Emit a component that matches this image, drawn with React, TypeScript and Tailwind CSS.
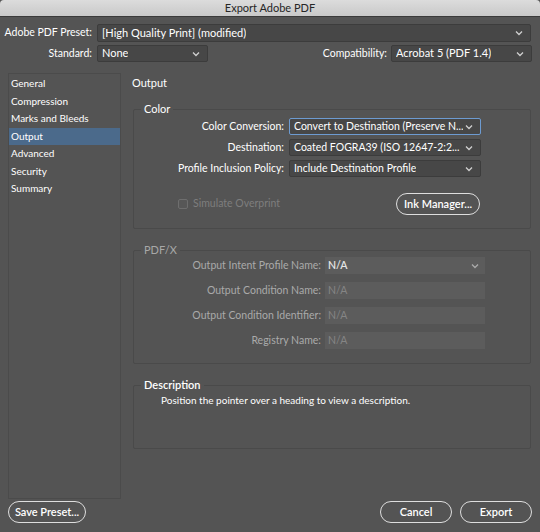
import React from "react";

const Chevron = ({ color = "#d0d0d0" }: { color?: string }) => (
  <svg width="8" height="6" viewBox="0 0 8 6" className="shrink-0">
    <polyline points="1,1.5 4,4.5 7,1.5" fill="none" stroke={color} strokeWidth="1.3" />
  </svg>
);

const Select = ({
  text,
  className = "",
  focus = false,
}: {
  text: string;
  className?: string;
  focus?: boolean;
}) => (
  <div
    className={
      "flex items-center justify-between px-[4px] bg-[#474747] text-white rounded-[2px] " +
      (focus ? "border-[1.5px] border-[#6d9bd1]" : "border border-[#3c3c3c]") +
      " " +
      className
    }
  >
    <span className="whitespace-nowrap overflow-hidden">{text}</span>
    <span className="pl-[2px] pr-[3px]">
      <Chevron />
    </span>
  </div>
);

const PillButton = ({ text, className = "" }: { text: string; className?: string }) => (
  <div
    className={
      "flex items-center justify-center h-[22px] rounded-full border-[1.5px] border-[#dedede] text-white text-[11px] font-semibold " +
      className
    }
  >
    {text}
  </div>
);

export default function App() {
  const sidebar = ["General", "Compression", "Marks and Bleeds", "Output", "Advanced", "Security", "Summary"];
  return (
    <div
      className="w-[540px] h-[532px] bg-[#545454] flex flex-col overflow-hidden text-[10.5px] text-[#e8e8e8]"
      style={{ fontFamily: "Lato, 'Liberation Sans', sans-serif" }}
    >
      {/* Title bar */}
      <div className="h-[17px] shrink-0 flex items-center justify-center bg-gradient-to-b from-[#dcdcdc] to-[#c9c9c9] border-b border-[#3a3a3a] rounded-t-[4px] text-[#262626] text-[11px]">
        Export Adobe PDF
      </div>

      {/* Preset rows */}
      <div className="flex flex-col px-[8px] pt-[7px] gap-[3px]">
        <div className="flex items-center h-[18px]">
          <div className="w-[84px] flex justify-end text-white whitespace-nowrap text-[10.5px]">Adobe PDF Preset:</div>
          <Select text="[High Quality Print] (modified)" className="ml-[5px] w-[434px] h-[18px] text-[11px]" />
        </div>
        <div className="flex items-center h-[17px]">
          <div className="w-[84px] text-right text-white text-[10.5px]">Standard:</div>
          <Select text="None" className="ml-[5px] w-[111px] h-[17px] text-[11px]" />
          <div className="flex-1 text-right text-white pr-[4px] text-[10.5px]">Compatibility:</div>
          <Select text="Acrobat 5 (PDF 1.4)" className="w-[141px] h-[17px] text-[11px]" />
        </div>
      </div>

      {/* Body */}
      <div className="flex mt-[11px] px-[8px] gap-[9px]">
        {/* Sidebar */}
        <div className="w-[113px] h-[426px] border border-[#4b4b4b] pt-[1px] flex flex-col">
          {sidebar.map((s) => (
            <div
              key={s}
              className={
                "h-[17.5px] flex items-center pl-[2px] text-[10px] text-white " +
                (s === "Output" ? "bg-[#4b6a8b]" : "")
              }
            >
              {s}
            </div>
          ))}
        </div>

        {/* Right panel */}
        <div className="w-[401px] flex flex-col">
          <div className="h-[21px] flex items-center pl-[2px] text-white text-[11px]">Output</div>

          {/* Color */}
          <fieldset className="ml-[3px] mt-[9px] h-[126px] border border-[#4a4a4a] rounded-[2px] px-0">
            <legend className="ml-[7px] px-[3px] text-white text-[11px] leading-[12px]">Color</legend>
            <div className="flex flex-col gap-[4px] mt-[3px]">
              {[
                ["Color Conversion:", "Convert to Destination (Preserve N...", true],
                ["Destination:", "Coated FOGRA39 (ISO 12647-2:2...", false],
                ["Profile Inclusion Policy:", "Include Destination Profile", false],
              ].map(([l, v, f]) => (
                <div key={l as string} className="flex items-center h-[17px]">
                  <div className="w-[150px] text-right text-white">{l as string}</div>
                  <Select text={v as string} focus={f as boolean} className="ml-[5px] w-[192px] h-[17px]" />
                </div>
              ))}
            </div>
            <div className="flex items-center mt-[16px] h-[22px]">
              <div className="ml-[44px] w-[10px] h-[10px] border border-[#6e6e6e] rounded-[2px] bg-[#575757]" />
              <div className="ml-[5px] text-[#7e7e7e]">Simulate Overprint</div>
              <PillButton text="Ink Manager..." className="ml-[116px] w-[84px]" />
            </div>
          </fieldset>

          {/* PDF/X */}
          <fieldset className="ml-[3px] mt-[15px] h-[120px] border border-[#4a4a4a] rounded-[2px]">
            <legend className="ml-[7px] px-[3px] text-[#a8a8a8] text-[11px] leading-[12px]">PDF/X</legend>
            <div className="flex flex-col gap-[8px] mt-[1px]">
              {["Output Intent Profile Name:", "Output Condition Name:", "Output Condition Identifier:", "Registry Name:"].map(
                (l, i) => (
                  <div key={l} className="flex items-center h-[17px]">
                    <div className="w-[187px] text-right text-[#aaaaaa]">{l}</div>
                    <div
                      className={
                        "ml-[4px] w-[160px] h-[17px] flex items-center justify-between px-[3px] bg-[#5c5c5c] " +
                        (i === 0 ? "text-[#e4e4e4] font-semibold" : "text-[#858585]")
                      }
                    >
                      <span>N/A</span>
                      {i === 0 && (
                        <span className="pr-[3px]">
                          <Chevron color="#aaaaaa" />
                        </span>
                      )}
                    </div>
                  </div>
                )
              )}
            </div>
          </fieldset>

          {/* Description */}
          <fieldset className="ml-[3px] mt-[15px] h-[70px] border border-[#4a4a4a] rounded-[2px]">
            <legend className="ml-[7px] px-[3px] text-white text-[11px] font-semibold leading-[12px]">Description</legend>
            <div className="ml-[27px] mt-[2px] text-[10px] text-white">
              Position the pointer over a heading to view a description.
            </div>
          </fieldset>
        </div>
      </div>

      {/* Bottom buttons */}
      <div className="flex items-center px-[8px] mt-[2px]">
        <PillButton text="Save Preset..." className="w-[78px]" />
        <div className="flex-1" />
        <PillButton text="Cancel" className="w-[72px]" />
        <PillButton text="Export" className="w-[72px] ml-[8px]" />
      </div>
    </div>
  );
}
